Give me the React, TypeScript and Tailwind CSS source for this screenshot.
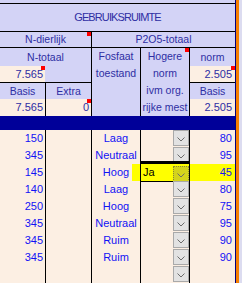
import React from 'react';

type Row = {
  n: string;
  toestand: string;
  hogere?: string;
  norm: string;
  highlight?: boolean;
};

const rows: Row[] = [
  { n: '150', toestand: 'Laag', norm: '80' },
  { n: '345', toestand: 'Neutraal', norm: '95' },
  { n: '145', toestand: 'Hoog', hogere: 'Ja', norm: '45', highlight: true },
  { n: '140', toestand: 'Laag', norm: '80' },
  { n: '250', toestand: 'Hoog', norm: '75' },
  { n: '345', toestand: 'Neutraal', norm: '95' },
  { n: '345', toestand: 'Ruim', norm: '90' },
  { n: '345', toestand: 'Ruim', norm: '90' },
  { n: '', toestand: '', norm: '' },
];

// rood hoekje = opmerking in de cel
const Marker = () => (
  <span className="absolute top-0 right-0 w-[4px] h-[4px] bg-[#ff0000]" />
);

const DropButton: React.FC<{ active?: boolean }> = ({ active }) => (
  <span
    className={`absolute top-0 right-0 w-[16px] h-[16px] border flex items-center justify-center ${
      active ? 'bg-[#d4d41c] border-[#8a8a30] border-dotted' : 'bg-[#e2e2e2] border-[#a9a9a9]'
    }`}
  >
    <svg width="8" height="5" viewBox="0 0 8 5" className="mt-[2px]">
      <path d="M0.5 0.5 L4 4 L7.5 0.5" fill="none" stroke="#6b6b6b" strokeWidth="1" />
    </svg>
  </span>
);

export default function App() {
  return (
    <div
      className="flex w-[242px] h-[283px] overflow-hidden bg-[#fcefe3] text-[11px]"
      style={{ fontFamily: '"Liberation Sans", Arial, sans-serif' }}
    >
      <div className="w-[235px] flex flex-col">
        {/* kop */}
        <div className="h-[4px] bg-[#d3d3f6]" />
        <div className="h-[34px] border-t border-black bg-[#d3d3f6] flex items-center justify-center text-[#2e2ea3] tracking-[-0.9px]">
          GEBRUIKSRUIMTE
        </div>
        <div className="h-[16px] border-t border-black bg-[#d3d3f6] flex text-[10.5px] text-[#2e2ea3] leading-[15px]">
          <div className="relative w-[91px] text-center">
            N-dierlijk
            <Marker />
          </div>
          <div className="flex-1 border-l border-black text-center">P2O5-totaal</div>
        </div>
        <div className="h-[69px] border-t border-black bg-[#d3d3f6] flex text-[10.5px] text-[#2e2ea3]">
          <div className="w-[91px] flex flex-col">
            <div className="h-[18px] leading-[18px] text-center">N-totaal</div>
            <div className="h-[16px] flex">
              <div className="relative w-[45px] bg-[#fcefe3] text-right pr-[2px] leading-[16px] text-[11px]">
                7.565
                <Marker />
              </div>
            </div>
            <div className="h-[17px] border-t border-black flex leading-[16px]">
              <div className="w-[45px] text-center">Basis</div>
              <div className="flex-1 border-l border-black text-center">Extra</div>
            </div>
            <div className="h-[17px] flex leading-[17px] text-[11px]">
              <div className="w-[45px] bg-[#fcefe3] text-right pr-[2px]">7.565</div>
              <div className="relative flex-1 border-l border-black bg-[#fcefe3] text-right pr-[2px]">
                0
                <Marker />
              </div>
            </div>
          </div>
          <div className="w-[49px] border-l border-black text-center leading-[17px]">
            <div>Fosfaat</div>
            <div>toestand</div>
          </div>
          <div className="relative w-[49px] border-l border-black text-center leading-[17px]">
            <div>Hogere</div>
            <div>norm</div>
            <div>ivm org.</div>
            <div className="whitespace-nowrap">rijke mest</div>
            <Marker />
          </div>
          <div className="flex-1 border-l border-black flex flex-col">
            <div className="h-[18px] leading-[18px] text-center">norm</div>
            <div className="relative h-[16px] bg-[#fcefe3] text-right pr-[3px] leading-[16px] text-[11px]">
              2.505
              <Marker />
            </div>
            <div className="h-[17px] border-t border-black leading-[16px] text-center">Basis</div>
            <div className="h-[17px] bg-[#fcefe3] text-right pr-[3px] leading-[17px] text-[11px]">2.505</div>
          </div>
        </div>
        <div className="h-[18px] bg-[#000099]" />

        {/* regels */}
        {rows.map((r, i) => (
          <div key={i} className="h-[17px] shrink-0 flex leading-[17px] text-[#1212f5]">
            <div className="w-[45px] text-right pr-[2px]">{r.n}</div>
            <div className="w-[46px] border-l border-black" />
            <div className="relative w-[49px] border-l border-black text-center">
              {r.highlight && <span className="absolute top-0 right-0 w-[8px] h-[17px] bg-[#ffff00]" />}
              {r.toestand}
            </div>
            <div className={`relative w-[49px] border-l border-black ${r.highlight ? 'bg-[#ffff00]' : ''}`}>
              {r.highlight ? (
                <>
                  <span className="absolute -top-[3px] -left-[1px] -right-[1px] -bottom-[1px] border border-black border-t-[3px] pointer-events-none" />
                  <span className="pl-[2px] text-black">{r.hogere}</span>
                  <span className="absolute top-[2px] right-0 w-[16px] h-[15px]">
                    <DropButton active />
                  </span>
                </>
              ) : (
                <DropButton />
              )}
            </div>
            <div className={`flex-1 border-l border-black text-right pr-[3px] ${r.highlight ? 'bg-[#ffff00]' : ''}`}>
              {r.norm}
            </div>
          </div>
        ))}
      </div>
      <div className="w-[1px] bg-[#000080]" />
      <div className="w-[3px] bg-[#f57f00]" />
      <div className="flex-1 bg-[#dcdcf0]" />
    </div>
  );
}
